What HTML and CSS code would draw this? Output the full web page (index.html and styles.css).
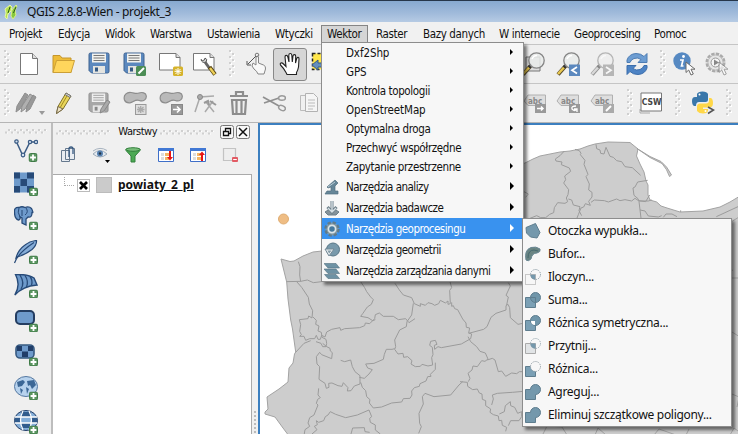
FILE: index.html
```html
<!DOCTYPE html>
<html lang="pl">
<head>
<meta charset="utf-8">
<title>QGIS 2.8.8-Wien - projekt_3</title>
<link rel="stylesheet" href="styles.css">
</head>
<body>
<svg class="defs" width="0" height="0" aria-hidden="true">
  <defs>
    <symbol id="plus" viewBox="0 0 9 9"><rect x=".5" y=".5" width="8" height="8" rx="1.5" fill="#5a9560" stroke="#3f7a46"/><path d="M4.5 1.6v5.8M1.6 4.5h5.8" stroke="#fff" stroke-width="1.8"/></symbol>
    <symbol id="floppy" viewBox="0 0 22 22"><path d="M1 2.5Q1 1 2.500 1h17Q21 1 21 2.500v17q0 1.500-1.500 1.500h-16L1 18.500z" fill="#5b88be" stroke="#3e628f"/><path d="M4 1.500h14v9H4z" fill="#f2f2ee"/><path d="M5.500 3.500h11M5.500 6h11M5.500 8.500h11" stroke="#777"/><path d="M5 14h12v7H5z" fill="#e4e4e0"/><path d="M7 15.500h3v4H7z" fill="#355983"/></symbol>
    <symbol id="lens" viewBox="0 0 24 24"><path d="M9.500 14 2 22.500" stroke="#55492c" stroke-width="4"/><path d="M8 15.500 2 22" stroke="#e9c84f" stroke-width="2.500"/><path d="m10.500 12.500-2.500 3" stroke="#333" stroke-width="3"/><circle cx="15.500" cy="8.500" r="7.700" fill="#e9ebea" fill-opacity=".85" stroke="#858585" stroke-width="1.300"/><path d="M11 7q1.500-3.500 5-3.500" fill="none" stroke="#fff" stroke-width="1.500"/></symbol>
    <symbol id="blob" viewBox="0 0 24 14"><path d="M1.500 9C0 4 4 1 8 1.500s5 1.500 8 .500 7-.500 7.300 3-3 6-7 4.500-6.300 2-9.300 2.300S2.300 11 1.500 9z" fill="#b9b9b9" stroke="#8d8d8d" stroke-width="1.200"/></symbol>
    <symbol id="tag" viewBox="0 0 24 14"><path d="M1 7 5 1h17.500v10.500H5z" fill="#dedede" stroke="#b0b0b0"/><text x="5" y="9.500" class="tag-text">abc</text></symbol>
    <symbol id="grip" viewBox="0 0 8 28"><g fill="#fff"><path d="M2 1h2v2H2zM5 4h2v2H5zM2 7h2v2H2zM5 10h2v2H5zM2 13h2v2H2zM5 16h2v2H5zM2 19h2v2H2zM5 22h2v2H5zM2 25h2v2H2z"/></g><g fill="#d0d0d0"><path d="M1 0h2v2H1zM4 3h2v2H4zM1 6h2v2H1zM4 9h2v2H4zM1 12h2v2H1zM4 15h2v2H4zM1 18h2v2H1zM4 21h2v2H4zM1 24h2v2H1z"/></g></symbol>
    <symbol id="cursor" viewBox="0 0 12 15"><path d="M1 1v10.500l2.700-2.500 2.300 5 2.300-1-2.300-4.800h4z" fill="#fff" stroke="#6a6a6a"/></symbol>
    <pattern id="gripx" width="6" height="5" patternUnits="userSpaceOnUse"><path d="M0 2.500h2v2H0zM3 0h2v2H3z" fill="#d0d0d0"/><path d="M2 3.500h1v1H2zM5 1h1v1H5z" fill="#fff"/></pattern>
  </defs>
</svg>
<div class="window">
  <header class="titlebar">
    <svg class="app-icon" viewBox="0 0 14 16"><path d="M1 5 6 1l2 2-1 4-3 3-1 5-2-2 1-4z" fill="#b4e24e" stroke="#e8f6a8"/><path d="m8 6 4-5 1 1-2 5 1 4-3 4-2-3z" fill="#86c93d" stroke="#dcef87"/><path d="M6 3 4 9M12 3 9.500 9" stroke="#2d5a1b"/></svg>
    <span class="title">QGIS 2.8.8-Wien - projekt_3</span>
  </header>
  <nav class="menubar">
    <span>Projekt</span><span>Edycja</span><span>Widok</span><span>Warstwa</span><span>Ustawienia</span><span>Wtyczki</span><span class="open">Wektor</span><span>Raster</span><span>Bazy danych</span><span>W internecie</span><span>Geoprocesing</span><span>Pomoc</span>
  </nav>
  <div class="toolbar file-bar">
    <svg class="grip"><use href="#grip"/></svg>
    <svg class="ic" viewBox="0 0 24 24"><path d="M3.500 1.500h12l5 5v16h-17z" fill="#fff" stroke="#777"/><path d="M15.500 1.500v5h5" fill="#ddd" stroke="#777"/></svg>
    <svg class="ic" viewBox="0 0 24 24"><path d="M2 20.500V3.500h7l2 2.500h9v14.500z" fill="#eebc38" stroke="#c5962c"/><path d="m2 20.500 3.500-12h18l-3.500 12z" fill="#ffd65c" stroke="#cb9f36"/></svg>
    <svg class="ic" viewBox="0 0 24 24"><use href="#floppy" x="1" y="0" width="22" height="22"/></svg>
    <svg class="ic" viewBox="0 0 24 24"><use href="#floppy" x="0" y="0" width="22" height="22"/><rect x="13" y="14" width="10" height="10" rx="1.500" fill="#4c8d55"/><path d="m15.500 21.500 5.500-5.500" stroke="#fff" stroke-width="2"/></svg>
    <svg class="ic" viewBox="0 0 24 24"><path d="M.500 1.500H17l4 4v12.500H.500z" fill="#fff" stroke="#777"/><path d="M17 1.500v4h4" fill="#ddd" stroke="#777"/><rect x="14" y="14.500" width="10" height="9.500" rx="1.500" fill="#d6b32b"/><path d="M19 16v7M15.500 19.300h7M16.500 17l5 5M21.500 17l-5 5" stroke="#fff"/></svg>
    <svg class="ic" viewBox="0 0 24 24"><path d="M.500 1.500H17l4 4v12.500H.500z" fill="#fff" stroke="#777"/><path d="M17 1.500v4h4" fill="#ddd" stroke="#777"/><path d="m12 10 5 7" stroke="#666" stroke-width="3"/><path d="M8 7.500q1 4 5 2.500 2-3-1-4l-.500 2-2 .500z" fill="#e0e0e0" stroke="#555"/><path d="m16.500 15 5.500 7.500" stroke="#554415" stroke-width="4"/><path d="m17 16 4.700 6.300" stroke="#edcf57" stroke-width="2.400"/></svg>
    <svg class="grip"><use href="#grip"/></svg>
    <svg class="ic" viewBox="0 0 24 24"><path d="M10 11 13 13V5q1.500-2 2.500 0v6l5 2q2.500 1 2 4l-1.500 5H15q-1-3-4-5l-2-3z" fill="#f8f8f8" stroke="#858585"/><path d="M5 12 13 4M4 9v4h4" fill="none" stroke="#555"/><circle cx="14" cy="3" r="1.800" fill="none" stroke="#777"/></svg>
    <div class="pressed"><svg class="ic" viewBox="0 0 24 24"><path d="M8 20.500Q6 16.500 2.500 13c-1-2 1-3 3-1l2.500 2.500L7 5c0-2 2.300-2.200 2.800-.200L11 10 10.800 3c.200-2 2.700-2 3 0l.500 7 .700-6c.300-2 2.700-1.800 2.700.200L17.500 11l1.200-4.500c.600-1.800 2.500-1.300 2.300.500L20.500 15q-.500 3-2 5.500v2H9z" fill="#fff" stroke="#222" stroke-width="1.100"/></svg></div>
    <svg class="ic" viewBox="0 0 24 24"><path d="M2.500 1.500h18v16h-18z" fill="#ffe64a" stroke="#222" stroke-width="1.500" stroke-dasharray="3 2"/><path d="m2 13 6-5v3h8v4H8v3z" fill="#658fbe" stroke="#335a87"/></svg>
    <i></i>
    <svg class="ic" viewBox="0 0 24 24"><path d="M5 5h14v14H5z" fill="#ddd" stroke="#777"/><use href="#lens" width="24" height="24"/></svg>
    <svg class="ic" viewBox="0 0 24 24"><use href="#lens" width="24" height="24"/><rect x="13" y="12.500" width="11" height="11.500" fill="#5b88be"/><path d="m21 15-5 3.300 5 3.200" fill="none" stroke="#fff" stroke-width="1.700"/></svg>
    <svg class="ic faded" viewBox="0 0 24 24"><use href="#lens" width="24" height="24"/><rect x="13" y="12.500" width="11" height="11.500" fill="#888"/><path d="m16 15 5 3.300-5 3.200" fill="none" stroke="#fff" stroke-width="1.700"/></svg>
    <svg class="ic" viewBox="0 0 24 24"><path d="M2 10.500V8q2-6 9-6.500 5 0 8 3l3-3v9h-9l3-3q-3-2.500-7-1-3 1-4 4z" fill="#6d9dd2" stroke="#4d7cb3"/><path d="M22 13.500V16q-2 6-9 6.500-5 0-8-3l-3 3v-9h9l-3 3q3 2.500 7 1 3-1 4-4z" fill="#4d83c4" stroke="#3b6dab"/></svg>
    <svg class="grip"><use href="#grip"/></svg>
    <svg class="ic" viewBox="0 0 24 24"><circle cx="9" cy="9" r="8.700" fill="#5689c2"/><circle cx="10.500" cy="4.500" r="1.400" fill="#fff"/><path d="M7 8h3l-1.500 6h2" fill="none" stroke="#fff" stroke-width="1.700"/><use href="#cursor" x="12" y="9" width="12" height="15"/></svg>
    <svg class="ic" viewBox="0 0 24 24"><circle cx="10.500" cy="10.500" r="8.500" fill="#eee" stroke="#aaa" stroke-width="3" stroke-dasharray="3.300 1.150"/><circle cx="10.500" cy="10.500" r="7.500" fill="#e6e6e6" stroke="#bbb"/><circle cx="10.500" cy="10.500" r="4.500" fill="#f5f5f5" stroke="#999"/><path d="M9 7.500v6l5-3z" fill="#888"/><use href="#cursor" x="13" y="9" width="12" height="15" opacity=".6"/></svg>
  </div>
  <div class="toolbar edit-bar">
    <svg class="grip"><use href="#grip"/></svg>
    <svg class="ic" viewBox="0 0 24 24"><path d="m2 21 1-6 8-13 3 2-8 14z" fill="#999" stroke="#8d8d8d"/><path d="m7 21 1-6 8-12 3 2-8 13z" fill="#b0b0b0" stroke="#8d8d8d"/><path d="m12 21 1-6 6-11 3 2-6 12z" fill="#999" stroke="#8d8d8d"/></svg>
    <svg class="drop" viewBox="0 0 6 4"><path d="M0 0h6L3 4z" fill="#999"/></svg>
    <svg class="ic" viewBox="0 0 24 24"><path d="m4.500 22.500 1.500-7L14 2l5 3-8 13z" fill="#e9d65b" stroke="#7d6f2a"/><path d="m4.500 22.500 1.500-7 5 2.500z" fill="#eee3c5" stroke="#75684a"/><path d="m8.500 16 7-12" stroke="#a48c22"/><path d="m13 3.500 5 3L19 5l-5-3z" fill="#d6d6d6" stroke="#777"/></svg>
    <svg class="ic" viewBox="0 0 24 24"><g class="gray"><use href="#floppy" x="1" y="1" width="21" height="21"/></g><path d="m13 22 1-4 6-9 3 2-6 9z" fill="#aaa" stroke="#888"/></svg>
    <svg class="ic" viewBox="0 0 24 24"><use href="#blob" y="0" width="24" height="14"/><rect x="12.500" y="13.500" width="10.500" height="10" fill="#ddd" stroke="#999"/><path d="M17.700 15v7M14 18.500h7.500M15 16l5.500 5M20.500 16 15 21" stroke="#aaa" stroke-width="1.300"/></svg>
    <svg class="ic" viewBox="0 0 24 24"><use href="#blob" y="0" width="24" height="14"/><rect x="12.500" y="13.500" width="11" height="10" fill="#999" stroke="#888"/><path d="M14 18.500h7m-3-3 3 3-3 3" fill="none" stroke="#fff" stroke-width="1.600"/></svg>
    <svg class="ic" viewBox="0 0 24 24"><path d="M2 21 7 6l14-1M12 21l8-11M13 11l8 10" fill="none" stroke="#aaa" stroke-width="1.500"/><path d="m11 12 4-2 1 4M17 10l6 4" fill="none" stroke="#999" stroke-width="2"/><circle cx="7" cy="6" r="2.500" fill="#aaa" stroke="#888"/></svg>
    <svg class="ic" viewBox="0 0 24 24"><path d="M3 5h18M9 4V1h7v3M5 9h14l-1 14H6zM9.500 10v12M14.500 10v12" fill="none" stroke="#8d8d8d" stroke-width="2.200"/></svg>
    <svg class="ic" viewBox="0 0 24 24"><path d="M1 6 17 15M2 12l15-5" stroke="#909090" stroke-width="1.700"/><ellipse cx="20" cy="7" rx="3.500" ry="2.300" fill="none" stroke="#999" stroke-width="1.500"/><ellipse cx="20" cy="17" rx="3.500" ry="2.300" transform="rotate(25 20 17)" fill="none" stroke="#999" stroke-width="1.500"/></svg>
    <svg class="ic" viewBox="0 0 24 24"><path d="M3.500 4.500h11v15h-11z" fill="#f0f0f0" stroke="#bbb"/><path d="M8.500 2.500h8l4 4v14h-12z" fill="#f5f5f5" stroke="#b2b2b2"/><path d="M11 9h7M11 12h7M11 15h7M11 18h5" stroke="#bbb"/></svg>
    <i></i>
    <svg class="ic" viewBox="0 0 24 24"><use href="#tag" y="3" width="24" height="14"/><path d="M12 13h11v9H12z" fill="#999"/><path d="M14 17.500h6m-2-2 2 2-2 2" fill="none" stroke="#fff" stroke-width="1.500"/></svg>
    <svg class="ic" viewBox="0 0 24 24"><use href="#tag" y="3" width="24" height="14"/><path d="M13 13h11v9H13z" fill="#999"/><path d="M20 15q-5 0-4 3 3 3 5 0m0 3v-3h-3" fill="none" stroke="#fff" stroke-width="1.300"/></svg>
    <svg class="ic" viewBox="0 0 24 24"><use href="#tag" y="3" width="24" height="14"/><path d="M13 13h11v9H13z" fill="#aaa"/><path d="m16 20 5-5" stroke="#fff" stroke-width="2"/></svg>
    <svg class="grip"><use href="#grip"/></svg>
    <svg class="ic csw" viewBox="0 0 24 24"><path d="M1 18v4h10" fill="none" stroke="#aaa"/><path d="M2 2h20.500v18H2z" fill="#fff" stroke="#777"/><text x="2.800" y="14.200" class="csw-text">CSW</text></svg>
    <svg class="grip"><use href="#grip"/></svg>
    <svg class="ic" viewBox="0 0 24 24"><path d="M6 6V3q1-2.500 5.500-2.500T17 3v6q0 2-2.500 2H8q-3 0-3 4H3q-2-1-2-5t3-4h7.500" fill="#3a77aa"/><circle cx="8.500" cy="3.500" r="1" fill="#fff"/><path d="M18 7h2q2 1 2 5t-3 4.500h-7V18h5v2q-1 2.500-5 2.500T6 20v-4.500q0-3 3-3h6q3 0 3-3z" fill="#ffd748"/><circle cx="14.500" cy="20" r="1" fill="#fff"/><path d="m17 16 5.500 3-5.500 3.500" fill="none" stroke="#555" stroke-width="1.600"/></svg>
    <svg class="grip"><use href="#grip"/></svg>
  </div>
  <main class="work">
    <aside class="layer-bar">
      <svg class="grip-row" width="42" height="5"><rect width="42" height="5" fill="url(#gripx)"/></svg>
      <svg class="ic" viewBox="0 0 24 24"><path d="M2.500 4 9 18l7-14h6" fill="none" stroke="#3b5c85" stroke-width="1.500"/><g fill="#d5e2f1" stroke="#3b5c85" stroke-width="1.200"><circle cx="2.500" cy="3.500" r="1.700"/><circle cx="9" cy="17" r="1.800"/><circle cx="16" cy="4" r="1.700"/><circle cx="22" cy="4" r="1.700"/></g><use href="#plus" x="14.500" y="15" width="9" height="9"/></svg>
      <svg class="ic" viewBox="0 0 24 24"><path d="M0 .500h20v20H0z" fill="#6e9acb"/><path d="M0 .500h6v6H0zM13 .500h7v6h-7zM6.500 7H13v7H6.500zM0 14h6v6.500H0zM13 14h7v6.500h-7z" fill="#274a78"/><use href="#plus" x="15" y="15.500" width="9" height="9"/></svg>
      <svg class="ic" viewBox="0 0 24 24"><path d="M5 1.500Q0 1 .500 6q0 7 4 8 2 0 1.500-3l2 1v5l4 2v-6l2-2q4 1 4-4.500 2 1-.500-4Q15 0 11 1.500 8 0 5 1.500z" fill="#6e9acb" stroke="#274a78" stroke-width="1.300"/><path d="M5 2Q3 6 6 11M12 2q3 4-1 7M8 4v6" fill="none" stroke="#274a78"/><use href="#plus" x="15" y="15.500" width="9" height="9"/></svg>
      <svg class="ic" viewBox="0 0 24 24"><path d="M2 18Q4 10 11 5 16 1 22.500.500 23 5 18 9.500 11 15 3 17z" fill="#86add8" stroke="#274a78" stroke-width="1.200"/><path d="M.500 23Q4 13 20 2.500" fill="none" stroke="#274a78" stroke-width="1.200"/><use href="#plus" x="15" y="15.500" width="9" height="9"/></svg>
      <svg class="ic" viewBox="0 0 24 24"><path d="M1.500.500Q14 0 20 4l3 7Q9 12 .800 21 7 11 1.500.500z" fill="#6e9acb" stroke="#274a78" stroke-width="1.400"/><path d="M6 1q5 8 1 14M11 1.500q4 6 1.500 11.500M16 2.500q3 4 1.500 8.500" fill="none" stroke="#274a78" stroke-width="1.300"/><use href="#plus" x="15" y="15.500" width="9" height="9"/></svg>
      <svg class="ic" viewBox="0 0 24 24"><rect x="2" y="3" width="18" height="13" rx="4" fill="#6e9acb" stroke="#243d61" stroke-width="2"/><use href="#plus" x="15" y="15.500" width="9" height="9"/></svg>
      <svg class="ic" viewBox="0 0 24 24"><rect x="2" y="3" width="18" height="13" rx="4" fill="#6e9acb" stroke="#365980" stroke-width="1.600"/><path d="M3 4h5v5H3zM14 4h5v5h-5zM8 9.500h6V15H8z" fill="#203d68"/><use href="#plus" x="15" y="15.500" width="9" height="9"/></svg>
      <svg class="ic" viewBox="0 0 24 24"><ellipse cx="12" cy="10.500" rx="11.500" ry="10" fill="#b7d2ed" stroke="#5477a0"/><path d="M3 6 9 4l2 2-3 4-4 1zM13 5l7-1 2 5-4 4-2-4-2 1zM6 12l3 2-2 4M12 11l3 2-2 5" fill="#3c6796"/><use href="#plus" x="15" y="15.500" width="9" height="9"/></svg>
      <svg class="ic" viewBox="0 0 24 24"><ellipse cx="12" cy="10.500" rx="11.500" ry="10" fill="#85afd9" stroke="#203d68"/><path d="M1 7h6v6H1zM7 2h10v5H7zM17 7h6v6h-6zM7 13h9v5H7z" fill="#315c8d"/><path d="M1 7h22M1 13h22M9 1q-5 9 0 19M15 1q5 9 0 19" fill="none" stroke="#fff" stroke-width="1.300"/><use href="#plus" x="15" y="15.500" width="9" height="9"/></svg>
    </aside>
    <section class="dock">
      <div class="dock-title">
        <svg width="54" height="5"><rect width="54" height="5" fill="url(#gripx)"/></svg>
        <span>Warstwy</span>
        <svg width="54" height="5"><rect width="54" height="5" fill="url(#gripx)"/></svg>
        <svg class="dock-btn" viewBox="0 0 14 14"><rect x=".5" y=".5" width="13" height="13" rx="2" fill="#f8f8f8" stroke="#777"/><path d="M5.500 6V3.500h5v5H8M5 3.500h6M3.500 6.500h5v4h-5zM3 6.500h6" fill="none" stroke="#111" stroke-width="1.300"/></svg>
        <svg class="dock-btn" viewBox="0 0 14 14"><rect x=".5" y=".5" width="13" height="13" rx="2" fill="#f8f8f8" stroke="#777"/><path d="m3 3 8 8m0-8-8 8" stroke="#111" stroke-width="1.500"/></svg>
      </div>
      <div class="dock-tools">
        <svg viewBox="0 0 18 18"><path d="M1.500 4.500h8v11h-8zM5.500 2.500h9v11h-9z" fill="#e9edf2" stroke="#66798e"/><path d="M9 11V3q0-2 2-2t2 2v5M9 4V2" fill="none" stroke="#375981" stroke-width="1.300"/></svg>
        <svg viewBox="0 0 18 18"><path d="M1 8q7-7 14 0-7 6-14 0z" fill="#e3e9f0" stroke="#9eabb8"/><circle cx="8" cy="7.500" r="3" fill="#5681b0"/><circle cx="8" cy="7.500" r="1.200" fill="#234"/><path d="M1 5q7-5 14-.500" fill="none" stroke="#a7b3c0"/><path d="M13 14h5l-2.500 3z"/></svg>
        <svg viewBox="0 0 18 18"><path d="M2 3h14v1.500L11 10v6H7v-6L2 4.500z" fill="#4ba953" stroke="#32803c"/><ellipse cx="9" cy="3.500" rx="7" ry="1.800" fill="#77bd79" stroke="#32803c"/></svg>
        <svg viewBox="0 0 18 18"><path d="M1.500 2.500h15v13h-15z" fill="#fff" stroke="#3f6fc8"/><path d="M1 2h16v3H1z" fill="#4178d4"/><path d="M4 7h3v3H4zM4 11h3v3H4z" fill="#ddd"/><path d="M8 7h4v3H8zM8 11h4v3H8z" fill="#f3b765"/><path d="M12 5h2v6h2l-3 3.500-3-3.500h2z" fill="#e91414"/></svg>
        <svg viewBox="0 0 18 18"><path d="M1.500 2.500h15v13h-15z" fill="#fff" stroke="#3f6fc8"/><path d="M1 2h16v3H1z" fill="#4178d4"/><path d="M4 7h3v3H4zM4 11h3v3H4z" fill="#ddd"/><path d="M8 7h4v3H8zM8 11h4v3H8z" fill="#f3b765"/><path d="M12 15h2V9h2l-3-3.500L10 9h2z" fill="#e91414"/></svg>
        <svg viewBox="0 0 18 18"><path d="M2.500 2.500h12v12h-12z" fill="#eee" stroke="#c3c3c3" stroke-width="1.200"/><rect x="11" y="11" width="6" height="5" rx="1" fill="#e25b64"/><path d="M12.200 13.500h3.600" stroke="#fff"/></svg>
      </div>
      <div class="tree">
        <div class="layer">
          <i class="branch"></i>
          <svg class="check" viewBox="0 0 13 13"><rect x=".5" y=".5" width="12" height="12" fill="#fff" stroke="#bbb"/><path d="m3 3 7 7m0-7-7 7" stroke="#000" stroke-width="2.700"/></svg>
          <i class="swatch"></i>
          <b>powiaty_2_pl</b>
        </div>
      </div>
    </section>
    <div class="splitter"></div>
    <section class="canvas">
      <svg viewBox="260 125 478 309" width="478" height="309">
        <g stroke="#a3a3a3" stroke-linejoin="round">
          <path fill="#cdcdcd" d="M281 259 290 261.500 294 261 303 256 313 252 322 251 400 220 480 180 525 163 533 159 540 156 550 154 560 152 570 151 580 149 588 146 595 144 608 142 630 142.500 638 149 636.500 156 640 164 644 172 646 181 648 185 648 195 650 200 656.700 202 661 206 667 208 680 212 703 211 720 207 730 202 740 196V436H289L283 428 275 417 265 414 265 412 268 409 267 397 279 389 288 382 289 368 293 363 294.500 354 295.700 352 292.500 329 290.700 320 288 299 286.700 282z"/>
          <path fill="#cdcdcd" stroke="#9c9c9c" stroke-width=".9" d="M637 148.500 650 156.500 661 161.500Q667 166 671.500 175L669.500 176.500Q667 169 662 163.500L650 157.500z"/>
          <g class="border-lines" transform="translate(250 120) scale(.33333)" fill="none" stroke="#9b9b9b" stroke-width="3">
            <path d="m145 425 5 15-1 25 3 20M110 485l42-1 20-4 18 8 25-3M140 485l15 17 20 30 3 20 10 20-2 22-10-6-2 8-26 3 4 15-3 20 5 10-5 5 13 0 5 12 12-5 15 0 5-10 5 12 7 0 4-12 10 5 5-15 15-8 25-5 2 8 12-5 45-3 15-6 2-8 13 2 15-15 2-12 12-5 12 10 30 0 15 10 22-3 10 12 18-12M137 697l25-27 20-8M198 665l15 5 5 10 10 0 2-10-2-12-12-6-2-15-10-4 3-15-10-5 2-12-10-10"/>
            <path d="m332 485 12 18 6 12 12 16 8 8-6 14-12 8-14 20-6 8 22 4 14 9 8-3M435 490l13 20 12 15 25 8 8 18 18 8 0-8 15 5 8-8 12 3 8 5 12-5 5-10 15 8 8-6 0 10 7-2-2-40 6-8-5-18M490 550l-5 35-14 20-2 15-20 10-15 30 3 20-3 8 10 14 15-2 2 12 12-2 13 12-3 10 13 8 15-1 5-6 18 5 14-3-3-22 4-9-2-22-8-6 3-12 14-3 5 12-8 3 1 12 10-8 10 3 60-11 28-16 3-14-9-3 3-15-10-2-1-13-10-12-15-28-9-3-4-9-5 2 0-12M656 640l45-12 10-8 12-28 15-12 30-10 0-13 6-4 5 10 2 30 23 20 15-3M770 555l5-24-7-5 13-28-6-10M654 650l8 15 18 15 10 14 16 5 8 18-9 7-10-2-13 18-13-2-3 12-12 10 6 15-5 10"/>
            <path d="m218 670 12 10 10 5 1 8 6 5-2 18-30-12-6-7-10 13 2 22 8 8-2 38 18 12 4 15 8-3-1-12 10-1 18 8 12 2 4-11 14 15-2 10 11-1 10-14 17-6 0-25-15-12-8-15-5-20-18 5-12-4M332 787l5 15 10 10 3 18 10 9-2 10 12 15 25-3 30-12 30-3 5-10 20-1 6-10-1-12 8-10 15-4 2-8 18-8 5-13 10-1-2-6 15-15 0-20M434 686l-8 2-17 0-6 15-3 15-28 12-25 2 6 12 14 5-10 13-14 13-15-3M206 805l-2 20 7 8-8 5-4 12 5 5-12 30-13 8-5 16 5 10-14 10-3 18M357 870l-35 15-35 8-30-10-16-8-7 10-8 5-5 12-15 5-7-5 3 12-9 5 8 10-15 13M357 870l8 20-6 5 2 12 15 8 0 15 15 12M303 942l5-18 35-1 2 12 14 2M525 820l27 10 50-5 25-30 11-10M525 820l-8 10 3 22-13 28 2 30 5 10-8 20M630 785l22 2 1 12 15 10 14-2 6 12 8 3 1 16 10 4 0 15 15 10-2 10 10 7 15 4 2 14 8-1 2 15 13 6-3 12M712 720l15-5 8 5 10 35 10-2 12 16 18-10 15 2 8-6 12 0M725 855l5-18-3-12 15-5 45-3 45-4M748 882l15-7 3-18 15-12 1 12 12 5 9 18 12-5 0 15-8 12-25 0-7 15"/>
          </g>
          <g class="border-lines" transform="translate(520 120) scale(.33333)" fill="none" stroke="#9b9b9b" stroke-width="3">
            <path d="m133 93-13 14-14 10 2 6 18 3-2 8 24 10 4 10-18 14 3 11-6 10 15 20-2 15-5 10 4 11-8 5-22-2-10 15-2 15-12 5-12 10-15 0-12-6-20 8M165 88l13 4 5 8-2 4 14 17-3 12 12 30-6 7 10 22-2 18 10 7 0 14-10 13 5 12-15-5-5 10-8 3-8 20-6 15M145 237l10 3 5 15 20 5-3 12 8 15M228 73l2 13 10 4 2 10 10 2 6-20 12 27 10 3 10 10 15 3 10 15 22 3 25 23M213 247l10-7 30 2 12 4 25-9 10 5 15-3 20 4 10-8 12 8 28 0 10-3M383 181l-30 5-8 15-6 3 3 22 12 10 3 8 6 50M389 225l-12 20-20-3M360 270l15 3 10 15 30 3 10-4M430 292l8-10 18 0 15 8M482 276l0-5M654 260l-65 30M12 215l13 7-8 10"/>
          </g>
          <path class="border-lines" fill="none" d="m733 270-6 3 2 5 10 0m-8-56 8-5m-7 115 8 5m-8 57 7 3-2 10M543 434l4-8 15 1 5 8m28 0 3-7 8 7m48 0 5-6 17 6m10 0 3-6m41 6 4-7 8 6"/>
        </g>
        <circle cx="283.500" cy="219" r="5" fill="#efbd84" stroke="#dfad72"/>
      </svg>
    </section>
  </main>
</div>

<div class="menu vector-menu">
  <div class="row">Dxf2Shp</div>
  <div class="row">GPS</div>
  <div class="row snug">Kontrola topologii</div>
  <div class="row">OpenStreetMap</div>
  <div class="row snug">Optymalna droga</div>
  <div class="row snug">Przechwyć współrzędne</div>
  <div class="row snug">Zapytanie przestrzenne</div>
  <div class="row tall"><svg viewBox="0 0 16 16"><path d="m3 8 8-7 3 3-3 3v5h3v3H1l2-3h4V8L4 9z" fill="#668698" stroke="#526e7e" stroke-width=".7"/><path d="m4 8 7-5" stroke="#b9ccd6"/></svg>Narzędzia analizy</div>
  <div class="row tall"><svg viewBox="0 0 16 16"><path d="M1 12q7-6 14 0l-3 3H4z" fill="#84929a" stroke="#6d7f89"/><path d="M8 1v10M3.500 7 8 12l4.500-5" fill="none" stroke="#6d7f89" stroke-width="3"/><path d="M8 1v10M4 8l4 4 4-4" fill="none" stroke="#d7e0e5" stroke-width="1.400"/></svg>Narzędzia badawcze</div>
  <div class="row tall active"><svg viewBox="0 0 16 16"><circle cx="8" cy="8" r="6.500" fill="#849daa" stroke="#617b8a" stroke-width="2.500" stroke-dasharray="3.200 1.880"/><circle cx="8" cy="8" r="5.500" fill="#8097a3"/><circle cx="8" cy="8" r="3.600" fill="#45799e" stroke="#dce5e9" stroke-width="1.700"/></svg>Narzędzia geoprocesingu</div>
  <div class="row tall"><svg viewBox="0 0 16 16"><circle cx="9" cy="7.500" r="6.500" fill="#7899ab" stroke="#577585"/><path d="M1 7h9l-5 7z" fill="#e9eef0" stroke="#738895"/><path d="m3.500 8.500 4 0-2.300 3z" fill="#8199a5"/></svg>Narzędzia geometrii</div>
  <div class="row tall"><svg viewBox="0 0 16 16"><path d="M0 .500h12l3.500 4.500H4zM0 6h12l3.500 4.500H4zM.500 11.500h11.500l3.500 4H4z" fill="#6e92a4" stroke="#527080" stroke-width=".6"/></svg>Narzędzia zarządzania danymi</div>
</div>

<div class="menu geo-menu">
  <div class="row"><svg viewBox="0 0 16 16"><path d="M1 4.500 10.500.500 15 9.500 12 15 5.500 14 1.500 10z" fill="#7498ac" stroke="#5f7e8f"/></svg>Otoczka wypukła...</div>
  <div class="row"><svg viewBox="0 0 16 16"><path d="M1 14Q-1 4 6 1.500q5-1.500 9 1.500 1 3-3 4-5 0-6 6-3 3-5 1z" fill="#6a8583" stroke="#688692"/><path d="M3 12q0-8 6-8l4 1" fill="none" stroke="#46696f"/></svg>Bufor...</div>
  <div class="row"><svg viewBox="0 0 16 16"><path d="M5.500 5.500h5v5q-5 0-5-5z" fill="#7498ac"/><path d="M.500 5.500h10v10H.500z" fill="none" stroke="#999" stroke-dasharray="1 1"/><circle cx="10.500" cy="5.500" r="5" fill="none" stroke="#7f929c" stroke-dasharray="1 1"/></svg>Iloczyn...</div>
  <div class="row"><svg viewBox="0 0 16 16"><path d="M.500 5.500h10v10H.500z" fill="#7ba0b5" stroke="#5e7d8e"/><circle cx="10.500" cy="5.500" r="5" fill="#7096aa" stroke="#5e7d8e"/><path d="M5.500 5.500h5v5" fill="none" stroke="#5e7d8e"/></svg>Suma...</div>
  <div class="row"><svg viewBox="0 0 16 16"><path d="M.500 5.500h10v10H.500z" fill="#7ba0b5" stroke="#5e7d8e"/><circle cx="10.500" cy="5.500" r="5" fill="#7096aa" stroke="#5e7d8e"/><path d="M6 6h4v4q-4 0-4-4z" fill="#fff"/></svg>Różnica symetryczna...</div>
  <div class="row"><svg viewBox="0 0 16 16"><path d="M.500 5.500h10v10H.500z" fill="#e1e4e6" stroke="#aaa"/><path d="M5.500 5.500h5v5q-5 0-5-5z" fill="#7498ac"/><circle cx="10.500" cy="5.500" r="5" fill="none" stroke="#8da0aa" stroke-dasharray="1 1"/></svg>Przytnij...</div>
  <div class="row"><svg viewBox="0 0 16 16"><path d="M.500 5.500h10v10H.500z" fill="#7ba0b5" stroke="#5e7d8e"/><circle cx="10.500" cy="5.500" r="5" fill="#f7f7f7" stroke="#8a979e" stroke-dasharray="1 1"/></svg>Różnica...</div>
  <div class="row"><svg viewBox="0 0 16 16"><path d="M.500 5.500h5a5 5 0 1 1 5 5v5H.500z" fill="#7498ac" stroke="#5e7d8e"/></svg>Agreguj...</div>
  <div class="row"><svg viewBox="0 0 16 16"><path d="M.500 5.500h5a5 5 0 1 1 5 5v5H.500z" fill="#7498ac" stroke="#5e7d8e"/></svg>Eliminuj szczątkowe poligony...</div>
</div>
</body>
</html>
```
FILE: styles.css
```css
* { box-sizing: border-box; }
body { margin: 0; background: #f0f0f0; color: #111; font: 12px/16px "DejaVu Sans Condensed", "DejaVu Sans", sans-serif; overflow: hidden; }
svg { display: block; flex: none; }
.defs { position: absolute; }
.window { width: 738px; height: 434px; display: flex; flex-direction: column; overflow: hidden; }

.titlebar { height: 22px; flex: none; display: flex; align-items: center; padding-left: 4px; border-top: 1px solid #26364a; background: linear-gradient(#87a9d0, #a1bbdb 60%, #b6cbe4); }
.app-icon { width: 14px; height: 16px; }
.title { margin-left: 9px; font: 12px/18px "Noto Sans", sans-serif; letter-spacing: -.35px; white-space: nowrap; }

.menubar { height: 22px; flex: none; display: grid; grid-template-columns: 49px 47px 45px 57px 68px 46px 55px 47px 76px 75px 80px 60px; padding-left: 9px; line-height: 24px; white-space: nowrap; font-stretch: condensed; font-family: "DejaVu Sans", sans-serif; font-size: 11.500px; letter-spacing: -.38px; background: #f1f1f1; }
.menubar .open { height: 18px; margin: 3px 3px 0 0; width: 47px; padding-left: 5px; line-height: 17px; background: #d5d5d5; border: 1px solid #858585; }

.toolbar { height: 39px; flex: none; display: grid; align-items: center; justify-items: center; border-top: 1px solid #c5c5c5; background: #efefef; overflow: hidden; }
.file-bar { grid-template-columns: 14px 30px 38px 34px 38px 34px 34px 20px 25px 45px 20px 182px 38px 32px 36px 34px 18px 26px 38px; }
.edit-bar { grid-template-columns: 14px 24px 8px 36px 34px 38px 34px 34px 34px 36px 34px 192px 34px 32px 36px 20px 22px 32px 18px 34px; }
.ic { width: 24px; height: 24px; }
.grip { width: 8px; height: 28px; }
.drop { width: 6px; height: 4px; margin-top: 20px; }
.pressed { width: 34px; height: 33px; display: flex; align-items: center; justify-content: center; border: 1px solid #888; border-radius: 3px; background: #d6d6d6; }
.faded { opacity: .55; filter: grayscale(1); }
.gray { filter: grayscale(1); opacity: .65; }
.tag-text { font: bold 8px "DejaVu Sans Condensed", "DejaVu Sans", sans-serif; fill: #888; }
.csw-text { font: bold 8.500px "DejaVu Sans Condensed", "DejaVu Sans", sans-serif; fill: #444; }

.work { flex: 1; min-height: 0; display: flex; border-top: 1px solid #b5b5b5; }
.layer-bar { width: 51px; flex: none; padding-top: 6px; display: flex; flex-direction: column; align-items: center; background: #efefef; }
.layer-bar .grip-row { margin: 0 0 4px; }
.layer-bar .ic { margin-bottom: 10px; }
.dock { width: 201px; flex: none; display: flex; flex-direction: column; border-left: 2px solid #bdbdbd; }
.dock-title { height: 18px; flex: none; display: flex; align-items: center; padding: 0 2px 0 3px; justify-content: space-between; font-size: 11px; letter-spacing: -.5px; }
.dock-title span { margin: 0 -2px 0 3px; }
.dock-btn { width: 14px; height: 14px; }
.dock-title .dock-btn + .dock-btn { margin-left: -3px; }
.dock-tools { height: 33px; flex: none; display: grid; grid-template-columns: repeat(6, 32.200px); justify-items: center; align-items: center; }
.dock-tools svg { width: 18px; height: 18px; margin-top: -5px; }
.tree { flex: 1; background: #fff; border-top: 1px solid #aaa; border-right: 1px solid #aaa; }
.layer { display: flex; align-items: center; height: 20px; padding-left: 11px; }
.branch { width: 10px; height: 9px; margin: -7px 3px 0 0; border: dotted #aaa; border-width: 0 0 1px 1px; }
.check { width: 13px; height: 13px; }
.swatch { width: 16px; height: 16px; margin: 0 6px; background: #cbcbcb; border: 1px solid #bcbcbc; }
.layer b { font: bold 12px/16px "Noto Sans", sans-serif; text-decoration: underline; white-space: nowrap; }
.splitter { width: 6px; flex: none; align-self: flex-end; height: 24px; background: radial-gradient(circle, #bbb 1px, transparent 1.200px) 0 0 / 6px 4px; }
.canvas { flex: 1; border: solid #3c7fbf; border-width: 2px 0 0 2px; background: #fff; overflow: hidden; }

.menu { position: absolute; background: #f7f7f7; border: 1px solid #8d8d8d; box-shadow: 3px 3px 3px rgba(0, 0, 0, .5); white-space: nowrap; }
.menu .row { display: flex; align-items: center; }
.vector-menu { left: 321px; top: 42px; width: 203px; height: 240px; }
.vector-menu .row { height: 19px; padding: 1px 0 0 24px; font-size: 11.500px; letter-spacing: -.1px; }
.vector-menu .snug { letter-spacing: -.38px; }
.vector-menu .tall { height: 21px; padding-left: 2px; letter-spacing: -.5px; }
.vector-menu svg { width: 16px; height: 16px; margin-right: 6px; }
.vector-menu .row::after { content: ""; margin: -3px 10px 0 auto; border: solid transparent; border-width: 3px 0 3px 3px; border-left-color: #000; }
.vector-menu .tall::after { border-width: 4px 0 4px 4px; margin-right: 9px; }
.vector-menu .active { background: #3992ef; color: #fff; }
.vector-menu .active::after { border-left-color: #fff; }
.geo-menu { left: 522px; top: 218px; width: 210px; height: 209px; font: 12px/16px "Noto Sans", sans-serif; }
.geo-menu .row { height: 23px; padding: 1px 0 0 2px; letter-spacing: -.3px; }
.geo-menu svg { width: 16px; height: 16px; margin-right: 7px; }
```
